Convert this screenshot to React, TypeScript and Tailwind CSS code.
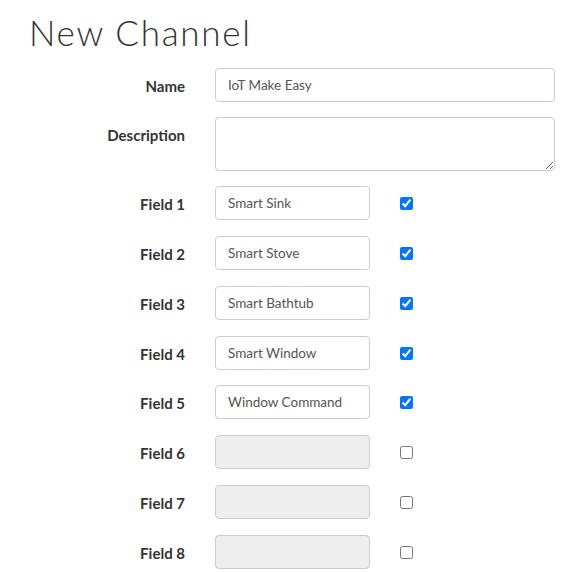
import { useState } from "react";

interface FieldRow {
  label: string;
  value: string;
  enabled: boolean;
}

const INITIAL_FIELDS: FieldRow[] = [
  { label: "Field 1", value: "Smart Sink", enabled: true },
  { label: "Field 2", value: "Smart Stove", enabled: true },
  { label: "Field 3", value: "Smart Bathtub", enabled: true },
  { label: "Field 4", value: "Smart Window", enabled: true },
  { label: "Field 5", value: "Window Command", enabled: true },
  { label: "Field 6", value: "", enabled: false },
  { label: "Field 7", value: "", enabled: false },
  { label: "Field 8", value: "", enabled: false },
];

const labelClass =
  "h-[34px] w-[185px] shrink-0 text-right text-[15px] font-bold leading-[36px] text-[#333] [font-family:Lato,'Liberation_Sans',sans-serif]";
const inputClass =
  "h-[34px] rounded-[4px] border border-[#ccc] px-3 text-[13.5px] text-[#555] outline-none disabled:bg-[#eee] [font-family:Lato,'Liberation_Sans',sans-serif]";

export default function App() {
  const [name, setName] = useState("IoT Make Easy");
  const [description, setDescription] = useState("");
  const [fields, setFields] = useState<FieldRow[]>(INITIAL_FIELDS);

  const updateField = (index: number, patch: Partial<FieldRow>) => {
    setFields((prev) => prev.map((f, i) => (i === index ? { ...f, ...patch } : f)));
  };

  return (
    <div className="min-h-[572px] bg-white">
      <h1 className="pl-[29px] pt-[10px] text-[35px] font-light leading-[44px] tracking-[1.7px] text-[#333] [font-family:Lato,'Liberation_Sans',sans-serif]">
        New Channel
      </h1>

      <form className="mt-[14px] flex flex-col gap-[15px]" onSubmit={(e) => e.preventDefault()}>
        <div className="flex items-start gap-[30px]">
          <label className={labelClass}>Name</label>
          <input
            value={name}
            onChange={(e) => setName(e.target.value)}
            className={`${inputClass} w-[340px]`}
          />
        </div>

        <div className="flex items-start gap-[30px]">
          <label className={labelClass}>Description</label>
          <textarea
            value={description}
            onChange={(e) => setDescription(e.target.value)}
            className={`${inputClass} h-[54px] w-[340px] resize-y py-1`}
          />
        </div>

        {fields.map((field, i) => (
          <div key={field.label} className="mb-[0.85px] flex items-start gap-[30px]">
            <label className={labelClass}>{field.label}</label>
            <input
              value={field.value}
              disabled={!field.enabled}
              onChange={(e) => updateField(i, { value: e.target.value })}
              className={`${inputClass} w-[155px]`}
            />
            <input
              type="checkbox"
              checked={field.enabled}
              onChange={(e) => updateField(i, { enabled: e.target.checked })}
              className="m-0 mt-[11px] h-[13px] w-[13px]"
            />
          </div>
        ))}
      </form>
    </div>
  );
}
